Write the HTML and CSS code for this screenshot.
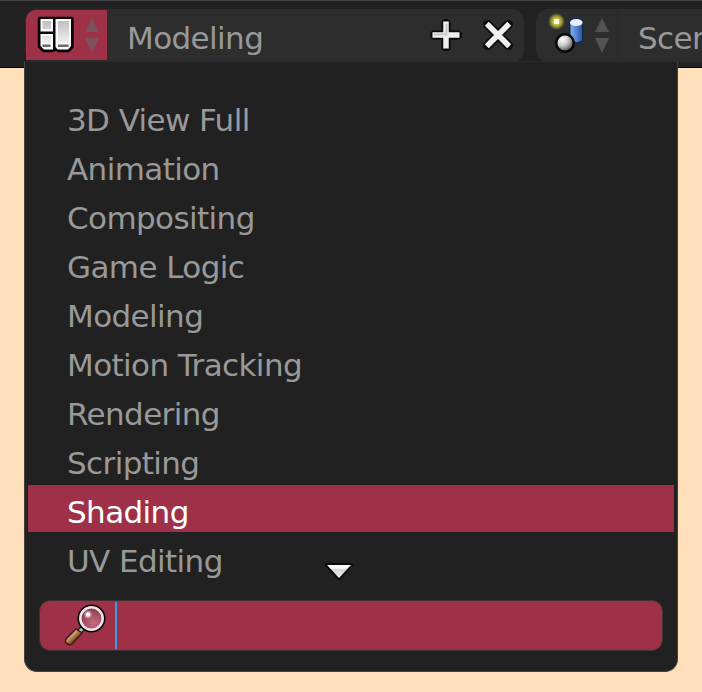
FILE: index.html
```html
<!DOCTYPE html>
<html lang="en">
<head>
<meta charset="utf-8">
<title>Screen layout</title>
<link rel="stylesheet" href="styles.css">
</head>
<body>
<header class="bar">
  <div class="group layout">
    <div class="picker active">
      <svg class="icon-layout" width="38" height="38" viewBox="0 0 38 38">
        <defs>
          <linearGradient id="pane" x2="0" y2="1"><stop stop-color="#c0c0c0"/><stop offset="1" stop-color="#f0f0f0"/></linearGradient>
        </defs>
        <path d="M2.500 1.500H35L36 2.500V31L32 35.500H22L19 34L15 35.500H6L1.500 31V2.500Z" fill="#0b0708" stroke="#0b0708" stroke-width="1.500" stroke-linejoin="round"/>
        <path d="M3.500 3H16V15.500H3.500ZM3.500 18H16V33.500H7L3.500 30ZM18.500 3H34V30L31 33.500H20.500L18.500 31Z" fill="#fafafa"/>
        <path d="M5.500 5H14V13H5.500ZM5.500 20H14V27H5.500ZM21 5H32V27H21Z" fill="url(#pane)"/>
        <path d="M5.500 28.500H13.500V31H5.500ZM21 28.500H31.500V31H21Z" fill="#696969"/>
      </svg>
      <svg class="arrows" width="14" height="35" viewBox="0 0 14 35"><path d="M7 0L14 14H0ZM0 20H14L7 35Z"/></svg>
    </div>
    <span class="label">Modeling</span>
    <svg class="icon-add" width="32" height="32" viewBox="0 0 32 32">
      <path d="M16 4.500V27.500M4.500 16H27.500" stroke="#0c0c0c" stroke-width="9.500" stroke-linecap="round"/>
      <path d="M16 2.500V29.500M2.500 16H29.500" stroke="#eee" stroke-width="5.500"/>
      <path d="M4 15.500H16.500V5" fill="none" stroke="#c8c8c8" stroke-width="2"/>
    </svg>
    <svg class="icon-close" width="32" height="32" viewBox="0 0 32 32">
      <path d="M5.500 5.500L26.500 26.500M26.500 5.500L5.500 26.500" stroke="#0c0c0c" stroke-width="9" stroke-linecap="round"/>
      <path d="M4.800 4.800L27.200 27.200M27.200 4.800L4.800 27.200" stroke="#f0f0f0" stroke-width="5.500"/>
    </svg>
  </div>
  <div class="group scene">
    <div class="picker">
      <svg class="icon-scene" width="38" height="40" viewBox="0 0 38 40">
        <defs>
          <radialGradient id="glow"><stop stop-color="#e2df3c"/><stop offset=".4" stop-color="#c4c238"/><stop offset=".7" stop-color="#83833a"/><stop offset="1" stop-color="#5c5c35" stop-opacity=".1"/></radialGradient>
          <linearGradient id="cyl"><stop stop-color="#8fb4ec"/><stop offset=".45" stop-color="#5b8bd8"/><stop offset="1" stop-color="#234b91"/></linearGradient>
          <radialGradient id="ball" cx=".35" cy=".3" r=".75"><stop stop-color="#fff"/><stop offset=".45" stop-color="#ccc"/><stop offset="1" stop-color="#444"/></radialGradient>
        </defs>
        <path d="M21.500 8Q28 3 35 8V28Q29 32 21.500 28Z" fill="url(#cyl)" stroke="#152b50" stroke-width="2"/>
        <ellipse cx="28.300" cy="9.500" rx="6.300" ry="3.600" fill="#e9f0fb"/>
        <circle cx="8.500" cy="8.500" r="8.500" fill="url(#glow)"/>
        <path d="M6 6H11V11H6Z" fill="#fffde0"/>
        <circle cx="17" cy="30" r="8.800" fill="url(#ball)" stroke="#080808" stroke-width="2.500"/>
      </svg>
      <svg class="arrows" width="14" height="35" viewBox="0 0 14 35"><path d="M7 0L14 14H0ZM0 20H14L7 35Z"/></svg>
    </div>
    <span class="label">Scene</span>
  </div>
</header>
<div class="menu">
  <ul class="items">
    <li>3D View Full</li>
    <li>Animation</li>
    <li>Compositing</li>
    <li>Game Logic</li>
    <li>Modeling</li>
    <li>Motion Tracking</li>
    <li>Rendering</li>
    <li>Scripting</li>
    <li class="selected">Shading</li>
    <li>UV Editing</li>
  </ul>
  <svg class="more" width="30" height="20" viewBox="0 0 30 20">
    <defs><linearGradient id="down" x2="0" y2="1"><stop stop-color="#fff"/><stop offset=".25" stop-color="#f8f8f8"/><stop offset=".35" stop-color="#d6d6d6"/><stop offset="1" stop-color="#eee"/></linearGradient></defs>
    <path d="M3 3H27L15 16Z" fill="#0a0a0a" stroke="#0a0a0a" stroke-width="4" stroke-linejoin="round"/>
    <path d="M3 3H27L15 16Z" fill="url(#down)"/>
  </svg>
  <div class="search">
    <svg class="icon-search" width="42" height="44" viewBox="0 0 42 44">
      <defs>
        <radialGradient id="lens" cx=".6" cy=".7" r=".7"><stop stop-color="#c66c80"/><stop offset="1" stop-color="#873a4e"/></radialGradient>
        <linearGradient id="wood" x1=".2" y1=".2" x2=".8" y2=".8"><stop offset=".25" stop-color="#d7b394"/><stop offset=".55" stop-color="#a66c39"/><stop offset=".8" stop-color="#6c3c16"/></linearGradient>
      </defs>
      <path d="M15.500 27.500L20 23" stroke="#33272a" stroke-width="6"/>
      <path d="M15.500 27.500L20 23" stroke="#bdc5c6" stroke-width="3"/>
      <path d="M12 25L18 29L8 40Q4 42 1.500 38Q1 36 3 34Z" fill="url(#wood)" stroke="#3b1b13" stroke-width="1.500"/>
      <circle cx="27.500" cy="14.500" r="14" fill="#090507"/>
      <circle cx="27.500" cy="14.500" r="11.200" fill="url(#lens)" stroke="#f1e5e8" stroke-width="2.500"/>
      <circle cx="24" cy="10.500" r="3.800" fill="#e3b6c3" opacity=".55"/>
      <circle cx="24" cy="10.500" r="2.200" fill="#fff"/>
    </svg>
    <span class="caret"></span>
  </div>
</div>
</body>
</html>
```

FILE: styles.css
```css
* { box-sizing: border-box; }
body {
  margin: 0;
  height: 692px;
  overflow: hidden;
  background: #ffe0bb;
  color: #999;
  font: 31px "DejaVu Sans", sans-serif;
  letter-spacing: -0.6px;
}
svg { display: block; flex: none; }
.bar {
  display: flex;
  gap: 12px;
  height: 68px;
  padding: 8px 0 0 25px;
  overflow: hidden;
  background: #212121;
  border-top: 1px solid #414141;
  border-bottom: 1px solid #000;
}
.group {
  display: flex;
  height: 53px;
  background: #2d2d2d;
  border-radius: 12px;
}
.layout { flex: none; width: 499px; }
.scene { flex: 1; min-width: 0; overflow: hidden; border-radius: 12px 0 0 12px; }
.label { line-height: 59px; white-space: nowrap; }
.picker {
  display: flex;
  flex: none;
  width: 82px;
  height: 51px;
  border-right: 1px solid #292929;
}
.active {
  margin: 1px 0 0 1px;
  width: 81px;
  height: 50px;
  border: 0;
  border-radius: 10px 0 0 0;
  background: #9e3147;
}
.arrows { margin: 9px 0 0 9px; fill: #525252; }
.active .arrows { margin: 8px 0 0 9px; fill: #7d525c; }
.icon-layout { margin: 6px 1px 0 11px; }
.icon-scene { margin: 4px 0 0 12px; }
.layout .label { width: 323px; padding-left: 20px; }
.scene .label { padding-left: 20px; }
.icon-add { margin: 10px 0 0 0; }
.icon-close { margin: 10px 0 0 20px; }
.menu {
  position: absolute;
  left: 24px;
  top: 61px;
  width: 654px;
  height: 611px;
  padding: 31px 3px 0;
  background: #212121;
  border: 1px solid #45413b;
  border-top-color: #2c2c2c;
  border-radius: 0 0 13px 13px;
}
.items { margin: 0; padding: 0; list-style: none; }
.items li {
  height: 47px;
  margin-bottom: 2px;
  padding: 7px 0 0 39px;
  line-height: 40px;
}
.items .selected { background: #9e3147; color: #fff; }
.more { position: absolute; left: 299px; top: 500px; }
.search {
  display: flex;
  width: 624px;
  height: 51px;
  margin: 19px 0 0 11px;
  padding-left: 24px;
  background: #9e3147;
  border: 1px solid #403136;
  border-radius: 11px;
}
.icon-search { margin-top: 3px; }
.caret { width: 2px; height: 47px; margin: 1px 0 0 9px; background: #3c9ae5; }
```
